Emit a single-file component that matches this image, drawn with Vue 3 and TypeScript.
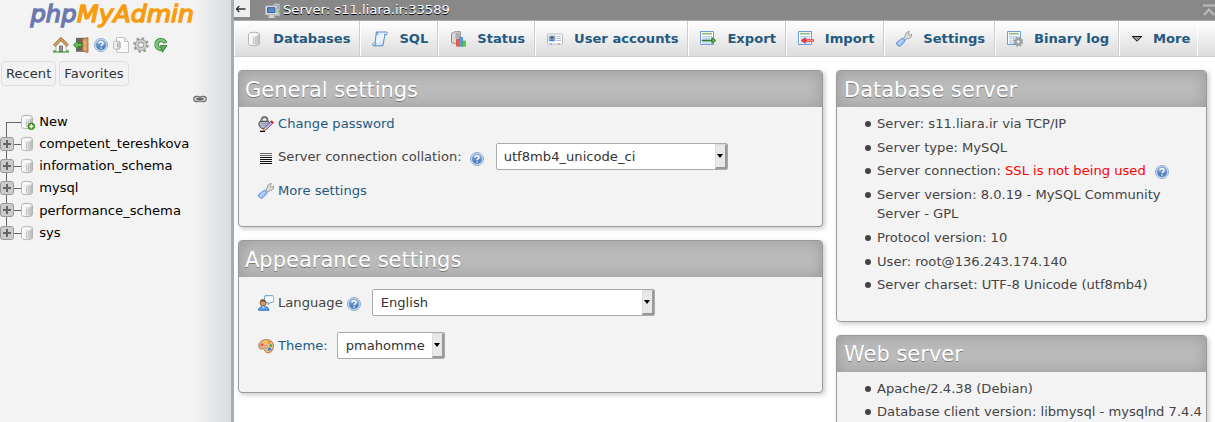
<script setup lang="ts">
interface Item { icon: string; label: string }

const quickIcons: string[] = ['home', 'exit', 'help', 'docs', 'gear', 'reload']
const databases: string[] = ['competent_tereshkova', 'information_schema', 'mysql', 'performance_schema', 'sys']
const tabs: Item[] = [
  { icon: 'db', label: 'Databases' },
  { icon: 'sql', label: 'SQL' },
  { icon: 'status', label: 'Status' },
  { icon: 'users', label: 'User accounts' },
  { icon: 'export', label: 'Export' },
  { icon: 'import', label: 'Import' },
  { icon: 'wrench', label: 'Settings' },
  { icon: 'binlog', label: 'Binary log' },
  { icon: 'more', label: 'More' },
]
interface Fact { text: string; warn?: string }
const serverFacts: Fact[] = [
  { text: 'Server: s11.liara.ir via TCP/IP' },
  { text: 'Server type: MySQL' },
  { text: 'Server connection: ', warn: 'SSL is not being used' },
  { text: 'Server version: 8.0.19 - MySQL Community Server - GPL' },
  { text: 'Protocol version: 10' },
  { text: 'User: root@136.243.174.140' },
  { text: 'Server charset: UTF-8 Unicode (utf8mb4)' },
]
const webFacts: string[] = ['Apache/2.4.38 (Debian)', 'Database client version: libmysql - mysqlnd 7.4.4']
</script>

<template>
  <svg class="defs" width="0" height="0" aria-hidden="true">
    <defs>
      <linearGradient id="g-cyl"><stop offset="0" stop-color="#fff" /><stop offset=".45" stop-color="#eee" /><stop offset="1" stop-color="#b5b5b5" /></linearGradient>
      <linearGradient id="g-blue" x2="0" y2="1"><stop offset="0" stop-color="#8fb4e0" /><stop offset="1" stop-color="#3c6fb0" /></linearGradient>
      <linearGradient id="g-paper" x2="1" y2="1"><stop offset="0" stop-color="#b9dbff" /><stop offset=".5" stop-color="#f1f8ff" /><stop offset="1" stop-color="#a9cff8" /></linearGradient>
    </defs>
    <symbol id="i-db" viewBox="0 0 16 16">
      <path d="M2.500 3.400C2.500.6 13.500.6 13.500 3.400v9.200c0 2.800-11 2.800-11 0z" fill="url(#g-cyl)" stroke="#b4b4b4" />
      <ellipse cx="8" cy="3.600" rx="4.600" ry="1.500" fill="#fff" stroke="#ddd" stroke-width=".6" />
      <path d="M7.500 6.500v6.500M9.500 6.500v6.500M11.500 6v6.500" stroke="#c4c4c4" />
    </symbol>
    <symbol id="i-newdb" viewBox="0 0 16 16">
      <use href="#i-db" /><circle cx="12.300" cy="12.300" r="3.300" fill="#55a630" stroke="#2c6e12" stroke-width=".8" />
      <path d="M12.300 10.300v4M10.300 12.300h4" stroke="#fff" stroke-width="1.300" />
    </symbol>
    <symbol id="i-home" viewBox="0 0 16 16">
      <path d="M0 14.500h16" stroke="#56ad4c" stroke-width="2.400" /><path d="M3 8l5-5 5 5v6.500H3z" fill="#fafafa" stroke="#999" stroke-width=".7" />
      <path d="M6.500 9h3v5.500h-3z" fill="#999" stroke="#555" stroke-width=".7" />
      <path d="M1.200 8.800L8 2l6.800 6.800" fill="none" stroke="#8f5b24" stroke-width="3" /><path d="M1.200 8.600L8 2l6.800 6.600" fill="none" stroke="#e0a45c" stroke-width="1.600" />
    </symbol>
    <symbol id="i-exit" viewBox="0 0 16 16">
      <path d="M3 .8h11v14H3z" fill="#6b6863" /><path d="M9.500 2L15 .6v15L9.500 14z" fill="#d59a5d" stroke="#a56a35" stroke-width=".8" /><path d="M11 4l2-.5v4L11 8zM11 9.500h2v3h-2z" fill="#e8b780" />
      <path d="M.5 8L5 3.700v2.600h4v3.500H5v2.600z" fill="#63bb58" stroke="#28762a" stroke-width=".9" />
    </symbol>
    <symbol id="i-help" viewBox="0 0 16 16">
      <circle cx="8" cy="8" r="6.500" fill="#e4edf7" stroke="#7fa0c6" stroke-width=".9" /><circle cx="8" cy="8" r="5" fill="url(#g-blue)" stroke="#6f98ca" stroke-width=".7" />
      <path d="M5.900 6.500C6 4.200 10.100 4.200 10.100 6.400c0 1.400-2 1.400-2 2.900M8.100 10.500v1.300" fill="none" stroke="#fff" stroke-width="1.400" />
    </symbol>
    <symbol id="i-docs" viewBox="0 0 16 16">
      <path d="M3.500.5h8l4 4v11h-12z" fill="#fafafa" stroke="#c4c4c4" /><path d="M11.500.8v3.700h3.700" fill="#eee" stroke="#c4c4c4" />
      <path d="M.7 5.200c0-1.400 6.500-1.400 6.500 0v5.900c0 1.400-6.500 1.400-6.500 0z" fill="url(#g-cyl)" stroke="#b4b4b4" />
      <path d="M4.500 6v4" stroke="#aaa" />
    </symbol>
    <symbol id="i-gear" viewBox="0 0 16 16">
      <circle cx="8" cy="8" r="6.500" fill="none" stroke="#999" stroke-width="2.600" stroke-dasharray="2.350 2.750" /><circle cx="8" cy="8" r="4.100" fill="none" stroke="#9b9b9b" stroke-width="4" /><circle cx="8" cy="8" r="4.100" fill="none" stroke="#ccc" stroke-width="2.400" />
    </symbol>
    <symbol id="i-reload" viewBox="0 0 16 16">
      <path d="M12.300 6.300A4.500 4.500 0 1 0 8.500 12" fill="none" stroke="#338039" stroke-width="4.200" /><path d="M12.100 5.900A4.500 4.500 0 1 0 8.500 12" fill="none" stroke="#80c97c" stroke-width="2.500" />
      <path d="M7.500 8.500H14L9.500 15.300z" fill="#5cb05c" stroke="#287330" stroke-width=".8" />
    </symbol>
    <symbol id="i-link" viewBox="0 0 16 16">
      <rect x="1.800" y="5.500" width="6.400" height="5" rx="2.500" fill="#ddd" stroke="#777" stroke-width="1.300" /><rect x="7.800" y="5.500" width="6.400" height="5" rx="2.500" fill="#ddd" stroke="#777" stroke-width="1.300" />
      <path d="M4.600 8h6.800" stroke="#444" stroke-width="2" /><path d="M5 8h6" stroke="#ccc" stroke-width=".6" />
    </symbol>
    <symbol id="i-server" viewBox="0 0 16 16">
      <path d="M9 .8h5.700v12H9z" fill="#ccc" stroke="#aaa" stroke-width=".8" /><path d="M10 3h4M10 5h4" stroke="#888" /><path d="M13 8.500h1.500" stroke="#3c3" stroke-width="2" />
      <rect x=".7" y="3" width="11" height="8.800" rx=".5" fill="#eee" stroke="#bbb" /><path d="M2.500 4.700h7.500v5H2.500z" fill="#5a87c7" stroke="#315c9c" />
      <path d="M4.500 12.300h4v2h-4zM3 14.500h7" fill="#ddd" stroke="#ccc" />
    </symbol>
    <symbol id="i-sql" viewBox="0 0 16 16">
      <path d="M4.300 1h10.400c1 1 .8 2.700-.7 2.800h-1.200L11 14.800H1.300c-1-.8-.6-2.800.8-2.800h1z" fill="url(#g-paper)" stroke="#5a91cc" />
      <path d="M4.800 1.200C6 2 5.800 3.400 4.500 3.700M12.800 3.800V2.500M1.800 14.500c1.800.2 2-1.400 2.200-2.500" fill="none" stroke="#4878b5" />
    </symbol>
    <symbol id="i-status" viewBox="0 0 16 16">
      <path d="M1.500 2.300L5 .7h5.400v11.600H4.500l-3-1z" fill="#d8d8d8" stroke="#929292" /><path d="M5.500 3h4M5.500 5h4M5.500 7h3" stroke="#888" /><path d="M1.500 13h6" stroke="#bbb" />
      <path d="M6.500 8.500h3v6.700h-3z" fill="#f45a3e" stroke="#dd3220" stroke-width=".6" /><path d="M9.500 6.500h3v8.700h-3z" fill="#4b9dfb" stroke="#3266d0" stroke-width=".6" /><path d="M12.500 10h3v5.200h-3z" fill="#5ad04e" stroke="#39a136" stroke-width=".6" />
      <path d="M9.400 9.800v5.400" stroke="#f27a1c" />
    </symbol>
    <symbol id="i-users" viewBox="0 0 16 16">
      <rect x=".5" y="3" width="15" height="10" rx=".8" fill="#fff" stroke="#bbb" /><path d="M2 5h6v5H2z" fill="#82b5e9" stroke="#609ad1" stroke-width=".6" /><circle cx="5" cy="6.700" r="1.600" fill="#8e5132" /><path d="M3.100 10c.2-2.100 3.500-2.100 3.800 0z" fill="#387dcc" />
      <path d="M9.500 5.500H14M9.500 7.500H14M9.500 9.500H14" stroke="#adc0d4" /><path d="M3 13h2M11 13h2" stroke="#aaa" stroke-width="1.400" />
    </symbol>
    <symbol id="i-sheet" viewBox="0 0 16 16">
      <path d="M1.500 1.500h13v13h-13z" fill="#fff" stroke="#6e9bd9" /><path d="M3 3.700h10" stroke="#96c083" stroke-width="1.800" />
      <path d="M3 6.500h10M3 8.700h10M3 11h10M3 13h10M5 6v7.500M7.500 6v7.500M10 6v7.500M12.500 6v7.500" stroke="#a6c5ec" stroke-width=".8" />
    </symbol>
    <symbol id="i-export" viewBox="0 0 16 16"><use href="#i-sheet" x="-1" y="-1" /><path d="M1.500 9.500h13" stroke="#2c8129" stroke-width="1.600" /><path d="M12 6.700l3.700 2.800-3.700 2.800z" fill="#72bd62" stroke="#26761e" stroke-width="1" /></symbol>
    <symbol id="i-import" viewBox="0 0 16 16"><use href="#i-sheet" x="-1" y="-1" /><path d="M4 9.500h12" stroke="#ed3b35" stroke-width="2.400" /><path d="M9 9.500h6" stroke="#ff9c94" stroke-width=".9" /><path d="M7.300 6.700l-3.800 2.800 3.800 2.800z" fill="#ff4840" stroke="#d21f1f" stroke-width=".7" /></symbol>
    <symbol id="i-binlog" viewBox="0 0 16 16"><use href="#i-sheet" x="-1" y="-1" /><circle cx="11.300" cy="10.700" r="3.800" fill="none" stroke="#8e8e8e" stroke-width="2" stroke-dasharray="1.700 1.280" /><circle cx="11.300" cy="10.700" r="2.500" fill="#eee" stroke="#a0a0a0" stroke-width="2" /></symbol>
    <symbol id="i-wrench" viewBox="0 0 16 16">
      <path d="M7.800 7.300L9.300 4.500C9.300 2 11.200.5 13.300.6L12.100 3.300l1.200 1 2.300-1.200c.5 2.700-1.600 4.600-3.800 4.500L9.200 9z" fill="#dcdcdc" stroke="#949494" stroke-width=".9" />
      <path d="M6.500 7.100l2.900 2.700-4.400 4.800c-2.200 1.900-5.700-.9-3.900-3.500z" fill="#9dbdf2" stroke="#6c8fd6" /><path d="M6.500 8.900l-4.100 4.200" stroke="#c5d9ff" stroke-width="1.400" />
    </symbol>
    <symbol id="i-more" viewBox="0 0 16 16"><path d="M1.200 5.500h9.600L6 10.200z" fill="#999" stroke="#111" stroke-width="1" /></symbol>
    <symbol id="i-password" viewBox="0 0 16 16">
      <path d="M3.500 5c0-5 6-5 6 0" fill="none" stroke="#555" stroke-width="2" /><path d="M3.700 5c0-4 5.600-4 5.600 0" fill="none" stroke="#ddd" stroke-width=".8" />
      <path d="M2 5.300h8.500l1 2-.6 3.200L8 12.300H3.800L1.500 10.500.8 7.500z" fill="#c6c8d0" stroke="#34343e" /><path d="M2.300 7.300h8M2.300 9.300h7" stroke="#8b909a" /><path d="M2 15.300h5" stroke="#000" stroke-width="1.200" />
      <path d="M5.200 14.900l1.200-3.100 6.500-6.100 1.700 1.800-6.500 6.200z" fill="#c8b8fa" stroke="#655099" stroke-width=".9" /><path d="M12.700 5.600l1.200-.8 1.600 1.800-1 1.100z" fill="#e43" stroke="#c32a1a" /><path d="M5 15l1.200-3 1.800 1.800z" fill="#e6ad2d" />
    </symbol>
    <symbol id="i-lines" viewBox="0 0 16 16"><path d="M2 2.500h12M2 4.500h12" stroke="#666" /><path d="M2 6.500h12M2 8.500h12M2 10.500h12M2 12.500h12" stroke="#111" /></symbol>
    <symbol id="i-lang" viewBox="0 0 16 16">
      <path d="M7 .7h7.500c1.300 0 1.300.7 1.300 2v2.900c0 1.300-.4 1.800-1.500 1.800h-1.900l-2.200 2.300V7.400H8c-1.300 0-2-.4-1.900-1.600z" fill="#f5faff" stroke="#6b98cc" />
      <circle cx="5" cy="7.900" r="3" fill="#d29b69" stroke="#7c512e" stroke-width=".8" /><path d="M2 7.200c0-4 5.800-3.800 6 .1-2-1.200-4-1.200-6-.1z" fill="#81532c" />
      <path d="M.5 15.200c.3-5.200 9.800-5.200 10.500 0z" fill="#67a5ef" stroke="#2c6ac0" /><path d="M3.800 11.500l1.500 1.700L7 11.500z" fill="#e8f2fc" />
    </symbol>
    <symbol id="i-palette" viewBox="0 0 16 16">
      <path d="M1 9.500C-.3 3.700 5.600.8 10.200 1.800c4.500 1 6.200 5 4.800 9-1 3.200-4 4.500-6.400 3.800-2-.6-1.200-3-3-3.600C4 10.500 2 12 1 9.500z" fill="#ecbd8d" stroke="#a36b3b" stroke-width=".9" />
      <circle cx="4" cy="6.800" r="1.600" fill="#ef5848" /><circle cx="7.200" cy="4.200" r="1.500" fill="#f8cf36" /><circle cx="11" cy="4.400" r="1.400" fill="#ef8b32" /><circle cx="12.800" cy="7.500" r="1.500" fill="#58af4e" /><circle cx="11.500" cy="11.200" r="1.600" fill="#4978c4" /><circle cx="7.900" cy="8.700" r="1.300" fill="#fff" stroke="#a36b3b" stroke-width=".8" />
    </symbol>
  </svg>

  <div class="app">
    <aside class="sidebar">
      <svg class="logo" width="168" height="30" viewBox="0 0 168 30">
        <text y="21.500" x="1.500" class="logo-php" textLength="46" lengthAdjust="spacingAndGlyphs">php</text>
        <text y="21.500" x="48" class="logo-admin" textLength="117" lengthAdjust="spacingAndGlyphs">MyAdmin</text>
      </svg>
      <div class="quick">
        <svg v-for="name in quickIcons" :key="name" class="icon"><use :href="'#i-' + name" /></svg>
      </div>
      <div class="recent"><button>Recent</button><button>Favorites</button></div>
      <div class="link-row"><svg class="icon"><use href="#i-link" /></svg></div>
      <ul class="tree">
        <li class="new"><span class="branch"></span><svg class="icon"><use href="#i-newdb" /></svg><span>New</span></li>
        <li v-for="name in databases" :key="name">
          <span class="branch"><svg class="plus" width="14" height="14" viewBox="0 0 14 14"><rect x=".5" y=".5" width="13" height="13" rx="2.500" fill="#ccc" stroke="#999" /><path d="M7 3v8M3 7h8" stroke="#666" stroke-width="2" /></svg></span>
          <svg class="icon"><use href="#i-db" /></svg><span>{{ name }}</span>
        </li>
      </ul>
    </aside>
    <div class="resizer"></div>

    <div class="content">
      <header class="serverbar">
        <span class="collapse"><svg width="10" height="8" viewBox="0 0 10 8"><path d="M0 4h9.500M3.200 1L.5 4l2.700 3" fill="none" stroke="#333" stroke-width="1.300" /></svg></span>
        <svg class="icon"><use href="#i-server" /></svg>
        <span class="server-name">Server: s11.liara.ir:33589</span>
        <svg class="top" width="12" height="12" viewBox="0 0 12 12"><path d="M0 1.500h12M1 11l5-5.500L11 11" fill="none" stroke="#bbb" stroke-width="2" /></svg>
      </header>
      <nav class="tabs">
        <a v-for="tab in tabs" :key="tab.icon" :class="['tab', tab.icon]"><svg class="icon"><use :href="'#i-' + tab.icon" /></svg>{{ tab.label }}</a>
      </nav>
      <main class="panels">
        <div class="col">
          <section class="card general">
            <h2>General settings</h2>
            <div class="row"><svg class="icon"><use href="#i-password" /></svg><a>Change password</a></div>
            <div class="row collation"><svg class="icon low"><use href="#i-lines" /></svg><span>Server connection collation:</span><svg class="icon help"><use href="#i-help" /></svg>
              <div class="select wide">utf8mb4_unicode_ci<i class="arrow"></i></div></div>
            <div class="row"><svg class="icon"><use href="#i-wrench" /></svg><a>More settings</a></div>
          </section>
          <section class="card appearance">
            <h2>Appearance settings</h2>
            <div class="row language"><svg class="icon"><use href="#i-lang" /></svg><span>Language</span><svg class="icon help"><use href="#i-help" /></svg>
              <div class="select lang">English<i class="arrow"></i></div></div>
            <div class="row theme"><svg class="icon"><use href="#i-palette" /></svg><a>Theme:</a><div class="select small">pmahomme<i class="arrow"></i></div></div>
          </section>
        </div>
        <div class="side">
          <section class="card database">
            <h2>Database server</h2>
            <ul class="facts">
              <li v-for="fact in serverFacts" :key="fact.text">{{ fact.text }}<template v-if="fact.warn"><span class="warn">{{ fact.warn }}</span><svg class="icon fact-help"><use href="#i-help" /></svg></template></li>
            </ul>
          </section>
          <section class="card web">
            <h2>Web server</h2>
            <ul class="facts"><li v-for="fact in webFacts" :key="fact">{{ fact }}</li></ul>
          </section>
        </div>
      </main>
    </div>
  </div>
</template>

<style>
body { margin: 0; overflow: hidden; }
</style>

<style scoped>
* { box-sizing: border-box; }
.defs { position: absolute; }
.app { display: flex; width: 1215px; height: 422px; overflow: hidden; background: #fff; color: #444; font: 13.12px/19.68px "DejaVu Sans", sans-serif; }
.icon { width: 16px; height: 16px; flex: none; display: block; }
a { color: #235a81; }
ul { list-style: none; margin: 0; padding: 0; }

.sidebar { width: 231px; flex: none; background: linear-gradient(to right, #f3f3f3 193px, #e6e8e9 211px, #d8dcdf 231px); color: #000; }
.logo { display: block; margin-left: 29px; overflow: visible; }
.logo text { font: italic 400 23px "DejaVu Sans", sans-serif; stroke-width: 1.400; }
.logo .logo-php { fill: #6c78af; stroke: #6c78af; }
.logo .logo-admin { fill: #f89c0e; stroke: #f89c0e; }
.quick { display: flex; gap: 4px; margin: 7px 0 0 53px; }
.recent { display: flex; gap: 3px; margin: 8px 0 0 1px; }
.recent button { height: 25px; padding: 0 4px; border: 1px solid #ddd; border-radius: 4px; background: #f2f2f2; color: #333; font: 13.12px "DejaVu Sans", sans-serif; }
.link-row { display: flex; margin: 5px 0 0 192px; }
.tree { margin-top: 3.500px; }
.tree li { display: flex; height: 22.200px; align-items: center; white-space: nowrap; }
.tree .icon { margin-right: 4.200px; }
.branch { position: relative; width: 19px; height: 100%; flex: none; display: flex; align-items: center; }
.branch::before { content: ""; position: absolute; left: 6px; top: 0; bottom: 0; border-left: 1px solid #666; }
.branch::after { content: ""; position: absolute; left: 6px; right: -2px; top: 50%; border-top: 1px solid #666; }
.tree .new .branch::before { top: 50%; }
.tree li:last-child .branch::before { bottom: 50%; }
.plus { position: relative; z-index: 1; }

.resizer { width: 3px; flex: none; background: #aaa; }
.content { flex: 1; min-width: 0; }
.serverbar { display: flex; height: 20px; align-items: center; background: #888; color: #fff; text-shadow: 0 1px 0 #000; }
.collapse { display: flex; width: 16px; height: 17px; margin-bottom: 3px; padding-left: 2px; align-items: center; background: #eee; }
.serverbar .icon { margin: 2px 0 0 15px; }
.server-name { margin-left: 2px; }
.top { margin: 0 0 0 auto; }
.tabs { display: flex; height: 37px; border-top: 1px solid #aaa; border-bottom: 1px solid #ccc; background: linear-gradient(#fff, #dcdcdc); }
.tab { display: flex; align-items: center; padding: 0 8.850px 0 11px; border-right: 1px solid #ccc; border-left: 1px solid #fff; font-weight: bold; white-space: nowrap; }
.tab .icon { margin-right: 11px; }
.tab.more .icon { margin-right: 6px; }
.tab.more { border-right-color: #fff; padding-right: 7px; }

.panels { display: flex; gap: 13px; padding: 13px 8px 0 4px; }
.col { width: 585px; }
.side { width: 371px; }
.card { border: 1px solid #999; border-radius: 4px; background: #f3f3f3; box-shadow: 2px 2px 5px #ccc; overflow: hidden; margin-bottom: 13px; }
.card h2 { height: 36px; margin: 0; padding: 0 6px; background: #bbb; box-shadow: inset 0 0 15px #999; color: #fff; font-size: 20.99px; line-height: 38px; font-weight: normal; text-shadow: 0 1px 0 #777; }
.side h2 { padding-left: 7px; }
.card.web h2 { line-height: 37px; }
.general { height: 157px; }
.appearance { height: 153px; }
.database { height: 252px; }
.web { height: 252px; }
.row { display: flex; align-items: center; height: 33px; padding-left: 19px; }
.row .icon { margin-right: 4px; }
.row .low { margin-top: 3px; }
.row .help { margin: 3px 11px 0 7px; }
.collation { height: 34px; }
.collation .select { margin-top: -1px; }
.language { margin-top: 9px; }
.language .help { margin: 3px 10px 0 3px; }
.theme { margin-top: 10px; }
.select { position: relative; display: flex; align-items: center; height: 27px; padding-left: 7px; border: 1px solid #aaa; border-radius: 2px; background: #fff; color: #333; }
.select.wide { width: 232px; }
.select.lang { width: 283px; padding-left: 8px; }
.select.small { width: 108px; margin-left: 9px; padding-left: 8px; }
.arrow { display: flex; width: 12px; height: 25px; margin-left: auto; align-items: center; justify-content: center; background: #e8e8e6; border: solid; border-width: 1px 2px 2px 1px; border-color: #ddd #999 #999 #ddd; }
.arrow::before { content: ""; border: 3px solid transparent; border-top: 4px solid #000; border-bottom: 0; }
.facts { padding: 7px 0 0 40px; }
.facts li { position: relative; margin-bottom: 3.920px; }
.facts li::before { content: ""; position: absolute; left: -12px; top: 7px; width: 6px; height: 6px; border-radius: 50%; background: #444; }
.warn { color: #f00; }
.fact-help { display: inline-block; margin: -3px 0 -4px 8px; vertical-align: middle; }
.web .facts li { white-space: nowrap; }
.web .facts { padding-top: 6.500px; }
</style>
